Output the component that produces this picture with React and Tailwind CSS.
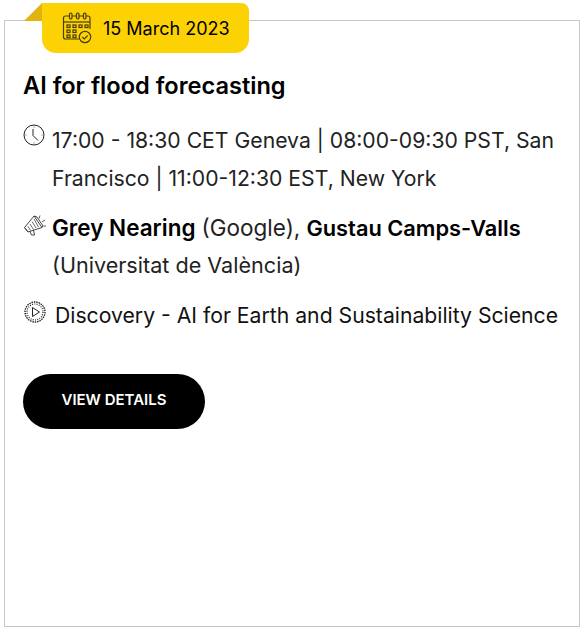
import React from 'react';

function CalendarIcon() {
  return (
    <svg width="32" height="32" viewBox="0 0 32 32" fill="none" stroke="#4a3c10" strokeWidth="1.2">
      <path d="M9 4H4.5A2 2 0 0 0 2.500 6v19a2 2 0 0 0 2 2h14" />
      <path d="M11.500 4h4M18 4h4M25 4h2a2 2 0 0 1 2 2v11" />
      <path d="M2.500 10h26.500" />
      <rect x="8.500" y="1" width="2.500" height="6" rx="1.200" />
      <rect x="15.500" y="1" width="2.500" height="6" rx="1.200" />
      <rect x="22.500" y="1" width="2.500" height="6" rx="1.200" />
      <rect x="6" y="13" width="3" height="2.500" />
      <rect x="12" y="13" width="3" height="2.500" />
      <rect x="18" y="13" width="3" height="2.500" />
      <rect x="24" y="13" width="3" height="2.500" />
      <rect x="6" y="18" width="3" height="2.500" />
      <rect x="12" y="18" width="3" height="2.500" />
      <rect x="6" y="23" width="3" height="2.500" />
      <rect x="12" y="23" width="3" height="2.500" />
      <circle cx="24" cy="25" r="5.700" />
      <path d="M21.300 25l2 2 3.400-3.500" />
    </svg>
  );
}

function ClockIcon() {
  return (
    <svg width="22" height="22" viewBox="0 0 22 22" fill="none" stroke="#222" strokeWidth="1">
      <circle cx="11" cy="11" r="10" />
      <path d="M10 5v6.500l5 5" />
      <path d="M11 2.500v1M11 18.500v1M2.500 11h1M18.500 11h1" strokeWidth="0.700" />
    </svg>
  );
}

function MegaphoneIcon() {
  return (
    <svg width="24" height="22" viewBox="0 0 24 22" fill="none" stroke="#444" strokeWidth="1">
      <path d="M1.500 13.500L11 2l8 11.500-14 4.500z" />
      <path d="M1.500 13.500L5 18" />
      <path d="M11 2l3 1 6 9-1 1.500" />
      <path d="M5 12.500l2.500 4M7 10l3.500 5.500M9 7.500l4 6.500M11 5l4.500 8" strokeWidth="0.800" />
      <path d="M7 17.500l1.500 3.500h3l-1-4.800" />
      <path d="M17 1.500l-1 3M22 6l-3 2M23 12h-2.500" strokeWidth="0.900" />
    </svg>
  );
}

function PlayIcon() {
  return (
    <svg width="24" height="24" viewBox="0 0 24 24" fill="none" stroke="#222">
      <circle cx="12" cy="12" r="10" strokeWidth="1.400" strokeDasharray="1.500 0.900" />
      <circle cx="12" cy="12" r="8" strokeWidth="1.200" strokeDasharray="1 1.300" />
      <path d="M9.500 7.500v9l7-4.500z" strokeWidth="1" />
    </svg>
  );
}

export default function App() {
  return (
    <div className="w-[584px] h-[629px] bg-white pt-5 pl-1 font-['Inter',sans-serif] text-[#222]">
      <div className="relative w-[576px] h-[607px] border border-[#c8c8c8] px-[18px] pt-[50px]">
        <div className="absolute left-[19px] top-[-18px] w-0 h-0 border-l-[18px] border-b-[18px] border-l-transparent border-b-[#e2b30f]" />
        <div className="absolute left-[37px] top-[-18px] w-[207px] h-[50px] bg-[#fcd205] rounded-b-[14px] rounded-tr-[8px] flex items-center gap-[10px] pl-[19px]">
          <CalendarIcon />
          <span className="text-[18px] text-black">15 March 2023</span>
        </div>

        <h3 className="text-[23.600px] leading-[30px] font-semibold text-black">AI for flood forecasting</h3>

        <div className="flex mt-[20px]">
          <div className="w-[29px] shrink-0 pt-[3px]"><ClockIcon /></div>
          <p className="text-[21.200px] leading-[38px]">17:00 - 18:30 CET Geneva | 08:00-09:30 PST, San Francisco | 11:00-12:30 EST, New York</p>
        </div>

        <div className="flex mt-[12px]">
          <div className="w-[29px] shrink-0 pt-[5px]"><MegaphoneIcon /></div>
          <p className="text-[21.600px] leading-[37px]">
            <b className="text-black font-semibold text-[22.500px]">Grey Nearing</b> <span className="text-[22.500px]">(Google),</span> <b className="text-black font-semibold text-[21.800px]">Gustau Camps-Valls</b> (Universitat de València)
          </p>
        </div>

        <div className="flex mt-[15px]">
          <div className="w-[32px] shrink-0 pt-[1px]"><PlayIcon /></div>
          <p className="text-[21.200px] leading-[32px] whitespace-nowrap text-[#111]">Discovery - AI for Earth and Sustainability Science</p>
        </div>

        <button className="block mt-[43px] w-[182px] h-[55px] pb-[2px] rounded-full bg-black text-white text-[15px] font-semibold">VIEW DETAILS</button>
      </div>
    </div>
  );
}
